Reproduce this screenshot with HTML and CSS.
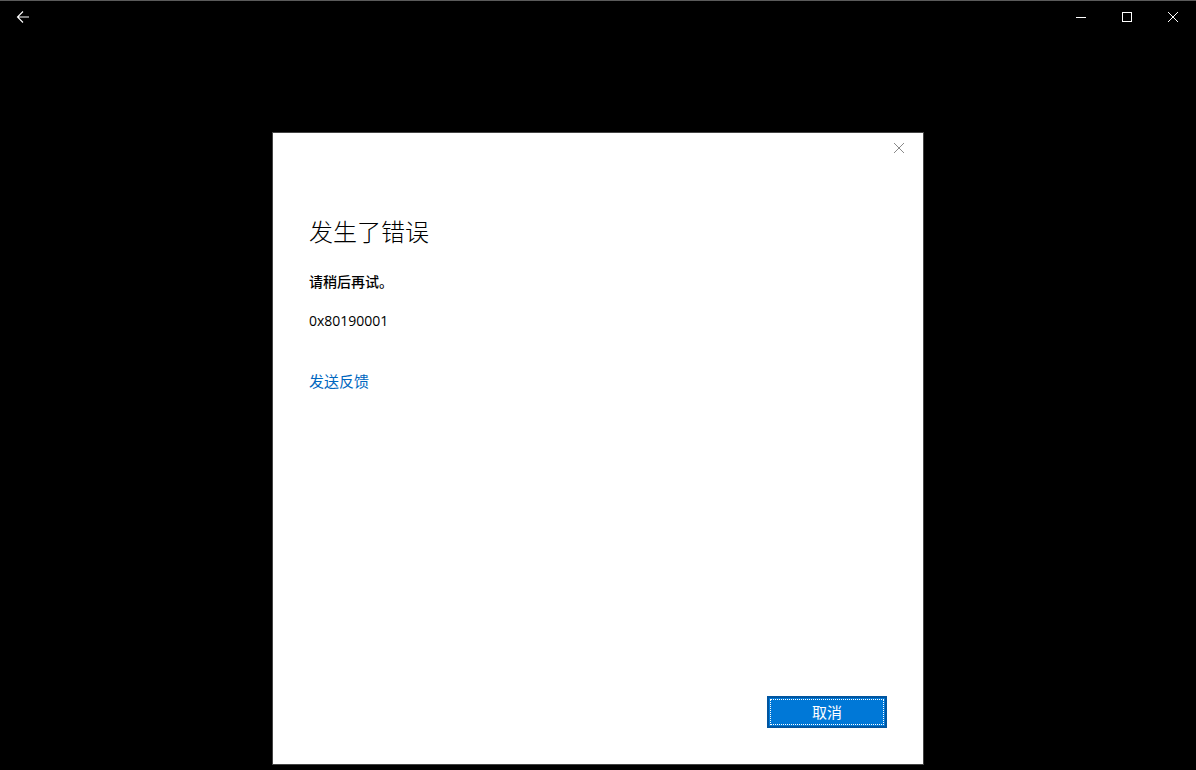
FILE: index.html
```html
<!DOCTYPE html>
<html lang="zh-CN">
<head>
<meta charset="utf-8">
<link rel="stylesheet" href="styles.css">
</head>
<body>
<div class="titlebar">
  <div class="back">
    <svg width="14" height="14" viewBox="0 0 14 14"><path d="M13 7H1.5M7 1.5L1.5 7L7 12.5" fill="none" stroke="#fff" stroke-width="1.1"/></svg>
  </div>
  <div class="caption">
    <div class="cbtn"><svg width="12" height="12" viewBox="0 0 12 12"><path d="M1 6.5H11" stroke="#fff" stroke-width="1"/></svg></div>
    <div class="cbtn"><svg width="12" height="12" viewBox="0 0 12 12"><rect x="1.5" y="1.5" width="9" height="9" fill="none" stroke="#fff" stroke-width="1"/></svg></div>
    <div class="cbtn"><svg width="12" height="12" viewBox="0 0 12 12"><path d="M1 1L11 11M11 1L1 11" stroke="#fff" stroke-width="1"/></svg></div>
  </div>
</div>
<div class="stage">
  <div class="dialog">
    <div class="dclose"><svg width="12" height="12" viewBox="0 0 12 12"><path d="M1 1L11 11M11 1L1 11" stroke="#8a8a8a" stroke-width="1"/></svg></div>
    <h1 class="title">发生了错误</h1>
    <p class="msg">请稍后再试。</p>
    <p class="code">0x80190001</p>
    <a class="link">发送反馈</a>
    <div class="actions">
      <button class="btn"><span class="focus">取消</span></button>
    </div>
  </div>
</div>
</body>
</html>
```
FILE: styles.css
```css
html, body {
  margin: 0;
  padding: 0;
  background: #000;
  height: 100%;
  font-family: "Noto Sans CJK SC", "Noto Sans", sans-serif;
}
.titlebar {
  height: 31px;
  border-top: 1px solid #5a5a5a;
  display: flex;
  justify-content: space-between;
  align-items: center;
}
.back {
  width: 46px;
  height: 31px;
  display: flex;
  align-items: center;
  justify-content: center;
}
.caption {
  display: flex;
  height: 31px;
}
.cbtn {
  width: 46px;
  height: 31px;
  display: flex;
  align-items: center;
  justify-content: center;
}
.stage {
  display: flex;
  justify-content: flex-start;
  padding-top: 100px;
  padding-left: 272px;
}
.dialog {
  position: relative;
  box-sizing: border-box;
  width: 652px;
  height: 633px;
  background: #fff;
  border: 1px solid #444;
  padding: 36px 36px 36px 36px;
  display: flex;
  flex-direction: column;
}
.dclose {
  position: absolute;
  top: 2px;
  right: 18px;
  width: 12px;
  height: 12px;
}
.title {
  margin: 46px 0 0 0;
  font-size: 24px;
  font-weight: 300;
  line-height: 32px;
  color: #000;
}
.msg {
  margin: 24px 0 0 0;
  font-size: 14px;
  font-weight: 500;
  line-height: 20px;
  color: #000;
}
.code {
  margin: 20px 0 0 0;
  font-family: "Open Sans", "Noto Sans", sans-serif;
  font-size: 14px;
  line-height: 20px;
  color: #000;
}
.link {
  margin-top: 40px;
  font-size: 15px;
  line-height: 20px;
  color: #0067c0;
}
.actions {
  margin-top: auto;
  display: flex;
  justify-content: flex-end;
}
.btn {
  width: 120px;
  height: 32px;
  box-sizing: border-box;
  background: #0078d7;
  border: 2px solid #0055a0;
  padding: 1px;
  margin: 0;
  display: flex;
}
.focus {
  flex: 1;
  border: 1px dotted #fff;
  color: #fff;
  font-family: "Noto Sans CJK SC", sans-serif;
  font-size: 15px;
  line-height: 24px;
  text-align: center;
}
```
